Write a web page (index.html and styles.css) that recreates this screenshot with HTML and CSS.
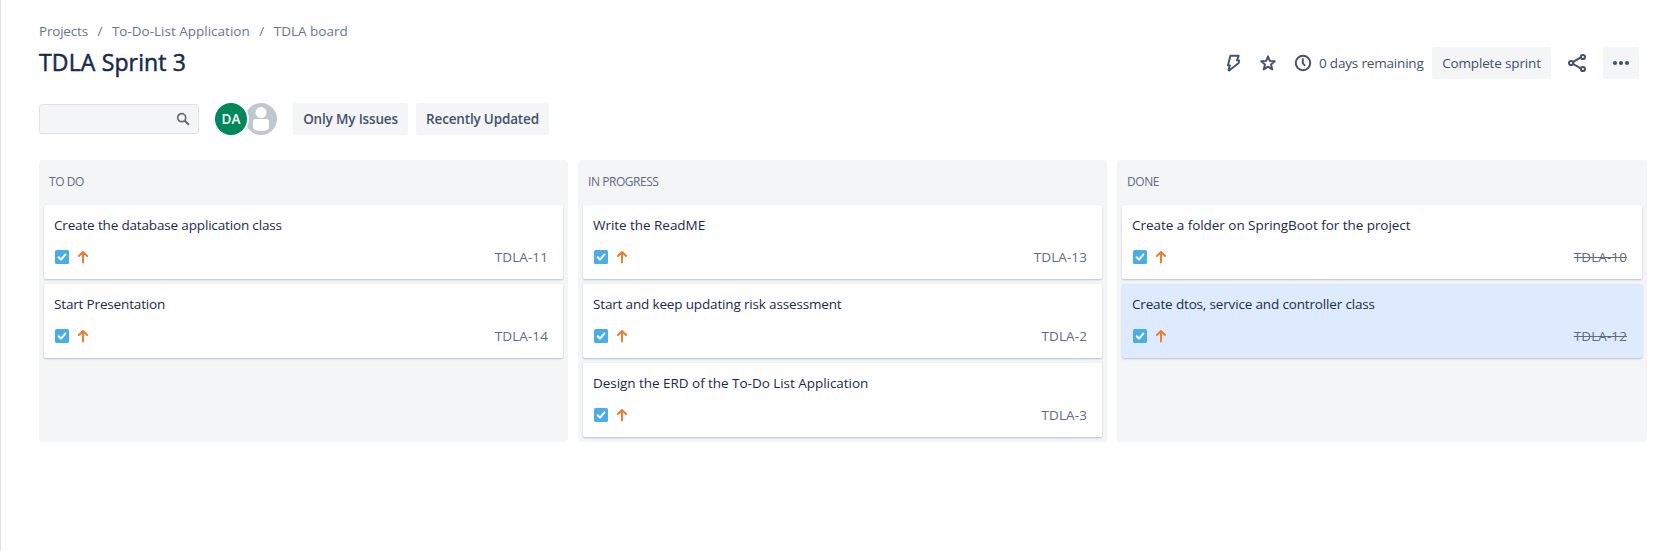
FILE: index.html
```html
<!DOCTYPE html>
<html lang="en">
<head>
<meta charset="utf-8">
<title>TDLA Sprint 3</title>
<link rel="stylesheet" href="styles.css">
</head>
<body>
<svg class="sprite" width="0" height="0">
  <symbol id="task" viewBox="0 0 14 14"><rect width="14" height="14" rx="1.5" fill="#4bade8"/><path d="M3.7 7.3 6 9.6l4.3-5" fill="none" stroke="#fff" stroke-width="2" stroke-linecap="round" stroke-linejoin="round"/></symbol>
  <symbol id="up" viewBox="0 0 12 14"><path d="M6 12.5V2.4M1.9 6 6 2l4.1 4" fill="none" stroke="#e97f33" stroke-width="2" stroke-linecap="round" stroke-linejoin="round"/></symbol>
</svg>
<main class="page">
  <nav class="breadcrumbs"><span class="project">Projects</span><span class="sep">/</span><span>To-Do-List Application</span><span class="sep">/</span><span>TDLA board</span></nav>
  <header class="header">
    <h1 class="title">TDLA Sprint 3</h1>
    <div class="actions">
      <svg class="bolt" width="16" height="20" viewBox="0 0 16 20"><path d="M5.4 2.8h8.3L11.9 7.4h2.2l-.4 2.7-9.5 7.4-.7-.6 1.5-4.500H2.900z" fill="none" stroke="#42526e" stroke-width="1.9" stroke-linejoin="round"/></svg>
      <svg class="star" width="18" height="18" viewBox="0 0 18 18"><path d="m9 2.300 1.800 4.600 5 .3-3.800 3.200 1.300 5L9 12.600l-4.300 2.800 1.300-5-3.800-3.200 5-.3z" fill="none" stroke="#42526e" stroke-width="1.9" stroke-linejoin="round"/></svg>
      <svg class="clock" width="18" height="18" viewBox="0 0 18 18"><circle cx="9" cy="9" r="7.200" fill="none" stroke="#42526e" stroke-width="2"/><path d="M8.800 5v4.400l1.800 1.700" fill="none" stroke="#42526e" stroke-width="1.900" stroke-linecap="round"/></svg>
      <span class="remaining">0 days remaining</span>
      <button class="btn complete">Complete sprint</button>
      <svg class="share" width="20" height="20" viewBox="0 0 20 20"><g fill="none" stroke="#42526e" stroke-width="2"><path d="m6.300 8.900 7-4.200M6.300 11l7 4.200"/><circle cx="4.100" cy="10" r="2.100"/><circle cx="15.900" cy="4" r="2.100"/><circle cx="15.900" cy="16" r="2.100"/></g></svg>
      <button class="btn more" aria-label="More actions"><svg width="18" height="6" viewBox="0 0 18 6" fill="#42526e"><circle cx="3" cy="3" r="2.100"/><circle cx="9" cy="3" r="2.100"/><circle cx="15" cy="3" r="2.100"/></svg></button>
    </div>
  </header>
  <div class="toolbar">
    <div class="search"><svg width="14" height="14" viewBox="0 0 14 14"><circle cx="5.700" cy="5.700" r="4" fill="none" stroke="#6b6b6b" stroke-width="1.700"/><path d="m8.800 8.800 3.500 3.400" stroke="#6b6b6b" stroke-width="2.200" stroke-linecap="round"/></svg></div>
    <div class="avatars">
      <div class="avatar">DA</div>
      <svg class="nobody" width="32" height="32" viewBox="0 0 32 32"><circle cx="16" cy="16" r="16" fill="#c1c7d0"/><circle cx="16" cy="9.500" r="5.500" fill="#fff"/><path d="M8 18.500a2.500 2.500 0 0 1 2.500-2.500h11a2.500 2.500 0 0 1 2.500 2.500V24c0 3-4 4-8 4s-8-1-8-4z" fill="#fff"/></svg>
    </div>
    <button class="btn filter mine">Only My Issues</button>
    <button class="btn filter recent">Recently Updated</button>
  </div>
  <div class="board">
    <section class="column">
      <h2 class="colhead">TO DO</h2>
      <article class="card"><p class="summary tight">Create the database application class</p><div class="meta"><svg width="14" height="14"><use href="#task"/></svg><svg width="12" height="14"><use href="#up"/></svg><span class="key">TDLA-11</span></div></article>
      <article class="card"><p class="summary tight">Start Presentation</p><div class="meta"><svg width="14" height="14"><use href="#task"/></svg><svg width="12" height="14"><use href="#up"/></svg><span class="key">TDLA-14</span></div></article>
    </section>
    <section class="column">
      <h2 class="colhead">IN PROGRESS</h2>
      <article class="card"><p class="summary">Write the ReadME</p><div class="meta"><svg width="14" height="14"><use href="#task"/></svg><svg width="12" height="14"><use href="#up"/></svg><span class="key">TDLA-13</span></div></article>
      <article class="card"><p class="summary tight">Start and keep updating risk assessment</p><div class="meta"><svg width="14" height="14"><use href="#task"/></svg><svg width="12" height="14"><use href="#up"/></svg><span class="key">TDLA-2</span></div></article>
      <article class="card"><p class="summary">Design the ERD of the To-Do List Application</p><div class="meta"><svg width="14" height="14"><use href="#task"/></svg><svg width="12" height="14"><use href="#up"/></svg><span class="key">TDLA-3</span></div></article>
    </section>
    <section class="column">
      <h2 class="colhead">DONE</h2>
      <article class="card"><p class="summary">Create a folder on SpringBoot for the project</p><div class="meta"><svg width="14" height="14"><use href="#task"/></svg><svg width="12" height="14"><use href="#up"/></svg><span class="key done">TDLA-10</span></div></article>
      <article class="card selected"><p class="summary tight">Create dtos, service and controller class</p><div class="meta"><svg width="14" height="14"><use href="#task"/></svg><svg width="12" height="14"><use href="#up"/></svg><span class="key done">TDLA-12</span></div></article>
    </section>
  </div>
</main>
</body>
</html>
```

FILE: styles.css
```css
* { box-sizing: border-box; }
body {
  margin: 0;
  background: #fff;
  color: #172b4d;
  font: 13.5px/20px "Open Sans", "Noto Sans", sans-serif;
  white-space: nowrap;
}
h1, h2, p { margin: 0; font-weight: 400; }
svg { display: block; flex: none; }
.sprite { position: absolute; }
.page {
  height: 551px;
  padding: 21px 15px 0 38px;
  border-left: 1px solid #e0e0e0;
  overflow: hidden;
}
.breadcrumbs { display: flex; height: 20px; color: #6b778c; }
.project { letter-spacing: -0.2px; }
.sep { width: 24px; text-align: center; }
.header { display: flex; justify-content: space-between; height: 32px; margin-top: 6px; padding-right: 8px; }
.title {
  font-size: 23px;
  line-height: 31px;
  letter-spacing: 0.15px;
  -webkit-text-stroke: 0.5px #172b4d;
}
.actions { display: flex; align-items: center; color: #42526e; }
.star { margin-left: 18px; }
.clock { margin-left: 17px; }
.remaining { width: 105px; margin-left: 7px; padding-bottom: 1px; letter-spacing: -0.18px; }
.btn {
  display: flex;
  align-items: center;
  justify-content: center;
  height: 32px;
  padding: 0;
  border: 0;
  border-radius: 3px;
  background: #f4f5f7;
  color: #42526e;
  font: inherit;
}
.complete { width: 119px; margin-left: 8px; padding-bottom: 1px; letter-spacing: -0.15px; }
.share { margin: 0 16px; }
.more { width: 36px; }
.toolbar { display: flex; align-items: center; height: 32px; margin-top: 24px; }
.search {
  display: flex;
  align-items: center;
  justify-content: flex-end;
  width: 160px;
  height: 30px;
  padding-right: 8px;
  border: 1px solid #dfe1e6;
  border-radius: 3px;
  background: #f4f5f7;
}
.avatars { display: flex; margin: 0 16px; }
.avatar {
  z-index: 1;
  width: 32px;
  height: 32px;
  border-radius: 50%;
  background: #00875a;
  box-shadow: 0 0 0 2px #fff;
  color: #fff;
  font-weight: 600;
  line-height: 32px;
  text-align: center;
}
.nobody { margin-left: -2px; }
.filter { padding-bottom: 1px; font-weight: 600; letter-spacing: -0.17px; }
.mine { width: 115px; margin-right: 8px; }
.recent { width: 133px; }
.board {
  display: grid;
  grid-template-columns: 529px 529px 530px;
  gap: 10px;
  height: 282px;
  margin-top: 25px;
}
.column {
  display: flex;
  flex-direction: column;
  gap: 5px;
  padding: 0 5px;
  border-radius: 4px;
  background: #f4f5f7;
}
.colhead { height: 40px; padding: 12px 5px 0; color: #5e6c84; font-size: 12px; letter-spacing: -0.45px; }
.card {
  height: 74px;
  padding: 10px 15px 0 10px;
  border-radius: 2px;
  background: #fff;
  box-shadow: 0 1px 2px rgba(9, 30, 66, 0.25);
}
.selected { background: #deebff; }
.summary { letter-spacing: -0.04px; }
.tight { letter-spacing: -0.16px; }
.meta { display: flex; align-items: center; height: 20px; margin-top: 12px; padding-left: 1px; }
.meta svg + svg { margin-left: 8px; }
.key { margin-left: auto; color: #5e6c84; letter-spacing: 0.1px; }
.done { text-decoration: line-through; }
```
